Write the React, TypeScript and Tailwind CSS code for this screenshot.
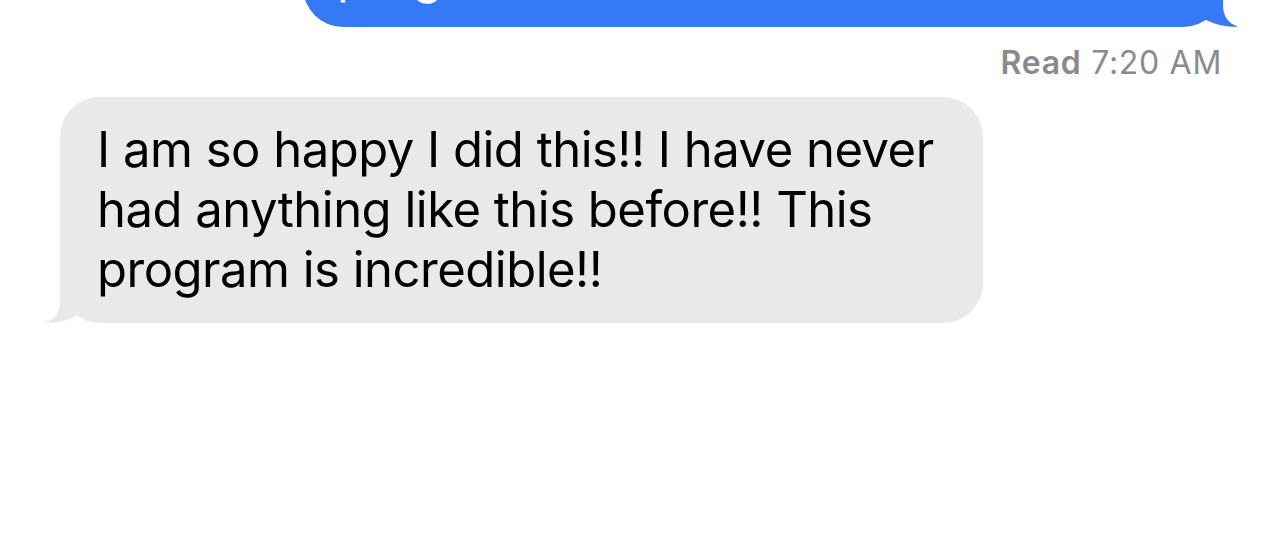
import type { ReactNode } from "react";

const FONT = "font-['Inter','Noto_Sans',sans-serif]";

function Tail({ color, flip }: { color: string; flip?: boolean }) {
  return (
    <svg
      width="56"
      height="50"
      viewBox="0 0 56 50"
      className={
        flip
          ? "absolute right-[-16px] bottom-0 -scale-x-100"
          : "absolute left-[-16px] bottom-0"
      }
    >
      <path
        d="M16,0 L16,28 C16,40 10,47 1,49.5 C14,50.5 27,47 36,41 L56,41 L56,0 Z"
        fill={color}
      />
    </svg>
  );
}

function Bubble({
  mine,
  className,
  children,
}: {
  mine?: boolean;
  className: string;
  children: ReactNode;
}) {
  return (
    <div className={"relative " + className}>
      <Tail color={mine ? "#3579f6" : "#e9e9eb"} flip={mine} />
      <div
        className={
          "relative rounded-[40px] " +
          (mine ? "bg-[#3579f6] text-white" : "bg-[#e9e9eb] text-black")
        }
      >
        {children}
      </div>
    </div>
  );
}

export default function App() {
  return (
    <div className={"h-[543px] w-full overflow-hidden bg-white flex flex-col " + FONT}>
      {/* sent message, mostly scrolled off the top */}
      <Bubble mine className="self-end mr-[61px] mt-[-79px] w-[920px]">
        <p className="pl-[34px] pt-[25px] pb-[21px] text-[49px] leading-[60px] tracking-[-0.5px]">
          program
        </p>
      </Bubble>

      <div className="self-end mr-[62px] mt-[17px] text-[32px] leading-[38px] tracking-[0.7px] text-[#8a8a8e]">
        <span className="font-semibold">Read</span> 7:20 AM
      </div>

      <Bubble className="ml-[60px] mt-[15px] w-[923px]">
        <p className="pl-[37px] py-[23px] text-[49px] leading-[60px] tracking-[-0.5px]">
          I am so happy I did this!! I have never
          <br />
          had anything like this before!! This
          <br />
          program is incredible!!
        </p>
      </Bubble>
    </div>
  );
}
